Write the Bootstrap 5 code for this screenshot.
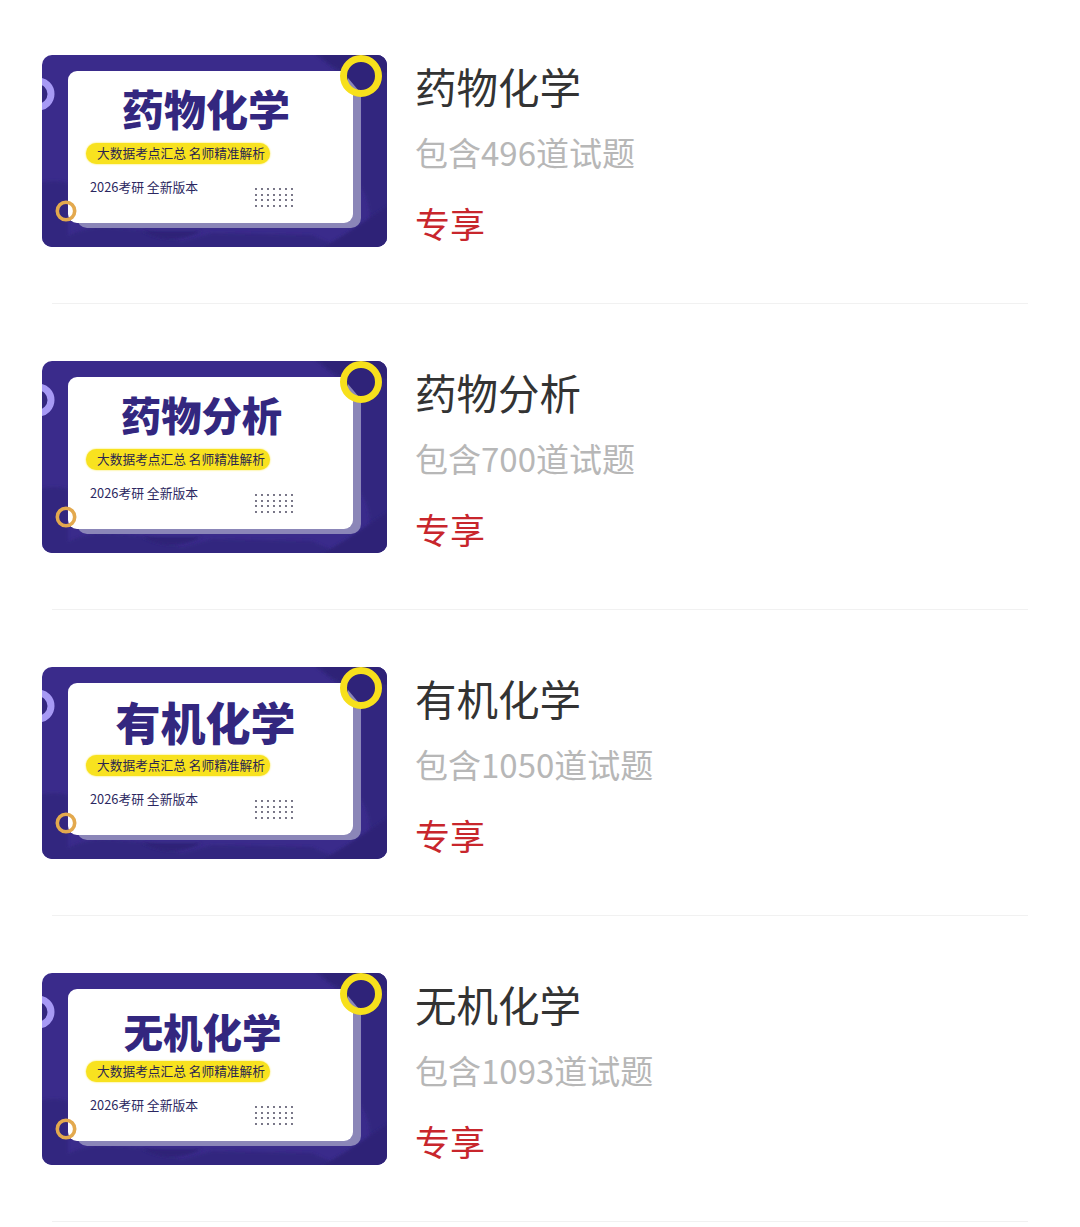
<!DOCTYPE html>
<html lang="zh-CN">
<head>
  <meta charset="UTF-8" />
  <title>题库列表</title>
  <meta name="viewport" content="width=device-width, initial-scale=1">
  <link href="https://cdn.jsdelivr.net/npm/bootstrap@5.3.0/dist/css/bootstrap.min.css" rel="stylesheet">
  <style>
    body {
      background: #fff;
      font-family: "Noto Sans CJK SC", "Noto Sans", sans-serif;
    }
    .page-list { padding-top: 55px; }
    .bank-row { padding-left: 42px; height: 248px; }
    .bank-sep { height: 1px; margin: 0 52px 57px; background: #f1f1f1; }
    .thumb {
      position: relative;
      width: 345px;
      height: 192px;
      flex: none;
      border-radius: 10px;
      overflow: hidden;
      background: #3a2b8b;
    }
    .thumb svg { position: absolute; left: 0; top: 0; width: 345px; height: 192px; }
    .thumb-panel {
      position: relative;
      width: 285px;
      height: 152px;
      margin: 16px 0 0 26px;
      background: #fff;
      border-radius: 9px;
    }
    .thumb-title {
      height: 72px;
      color: #33277f;
      font-weight: 900;
      white-space: nowrap;
      text-align: center;
    }
    .t1 { font-size: 42px; line-height: 74px; padding-right: 9px; }
    .t2 { font-size: 40.3px; line-height: 74px; padding-right: 18px; }
    .t3 { font-size: 45px; line-height: 78px; padding-right: 10px; }
    .t4 { font-size: 39.5px; line-height: 84px; padding-right: 16px; }
    .thumb-pill {
      width: 184px;
      height: 21px;
      margin-left: 18px;
      padding-left: 6px;
      background: #f8e21f;
      border-radius: 11px;
      box-shadow: 0 0 2px #f8e21f;
      color: #2b2550;
      font-size: 12.7px;
      line-height: 20px;
      text-align: center;
      white-space: nowrap;
    }
    .thumb-ver {
      margin: 13px 0 0 22px;
      color: #2b2760;
      font-size: 12.8px;
      line-height: 19px;
      white-space: nowrap;
    }
    .bank-info { margin-left: 28px; }
    .bank-name { height: 65px; color: #333; font-size: 41.5px; line-height: 62px; }
    .bank-count { height: 65px; color: #b7b7b7; font-size: 33px; line-height: 64px; }
    .bank-tag { color: #c8262c; font-size: 35px; line-height: 76px; }
  </style>
</head>
<body>
  <svg width="0" height="0" class="d-block">
    <defs>
      <filter id="soft"><feGaussianBlur stdDeviation="1.5"/></filter>
      <symbol id="thumbBack" viewBox="0 0 345 192">
        <g filter="url(#soft)" fill="#33267f">
          <path d="M262 -4h87v196h-35q25-25 5-60l0-100q-25-15-50-36z"/>
          <path d="M-4 128q18-4 30 0v70H-4z"/>
          <path d="M10 196q10-20 50-24l50 4 30 10 30-8 100 2 40 18z"/>
        </g>
        <g filter="url(#soft)" fill="#2e2377">
          <path d="M100 176q30 16 60 0z"/>
          <path d="M275 196l30-18 42-28v46z"/>
          <path d="M275 -4h74v22h-40q-20-4-34-22z"/>
        </g>
        <rect x="35" y="24" width="284" height="149" rx="10" fill="#8b86b8"/>
      </symbol>
      <symbol id="thumbFront" viewBox="0 0 345 192">
        <circle cx="319" cy="21" r="17.5" fill="#2f2379"/>
        <path d="M306 23l11 13-14-2z" fill="#8b86b8"/>
        <circle cx="319" cy="21" r="17.5" fill="none" stroke="#f7e01c" stroke-width="7"/>
        <circle cx="-4" cy="39" r="13" fill="#33277f" stroke="#a79af5" stroke-width="7"/>
        <circle cx="24" cy="156" r="8.7" fill="none" stroke="#e3a94e" stroke-width="3.6"/>
        <g fill="#3a3650">
          <circle cx="214" cy="134" r=".9"/><circle cx="220" cy="134" r=".9"/><circle cx="226" cy="134" r=".9"/><circle cx="232" cy="134" r=".9"/><circle cx="238" cy="134" r=".9"/><circle cx="244" cy="134" r=".9"/><circle cx="250" cy="134" r=".9"/>
          <circle cx="214" cy="140" r=".9"/><circle cx="220" cy="140" r=".9"/><circle cx="226" cy="140" r=".9"/><circle cx="232" cy="140" r=".9"/><circle cx="238" cy="140" r=".9"/><circle cx="244" cy="140" r=".9"/><circle cx="250" cy="140" r=".9"/>
          <circle cx="214" cy="145" r=".9"/><circle cx="220" cy="145" r=".9"/><circle cx="226" cy="145" r=".9"/><circle cx="232" cy="145" r=".9"/><circle cx="238" cy="145" r=".9"/><circle cx="244" cy="145" r=".9"/><circle cx="250" cy="145" r=".9"/>
          <circle cx="214" cy="151" r=".9"/><circle cx="220" cy="151" r=".9"/><circle cx="226" cy="151" r=".9"/><circle cx="232" cy="151" r=".9"/><circle cx="238" cy="151" r=".9"/><circle cx="244" cy="151" r=".9"/><circle cx="250" cy="151" r=".9"/>
        </g>
      </symbol>
    </defs>
  </svg>

  <div class="page-list">
    <div class="bank-row d-flex">
      <div class="thumb">
        <svg><use href="#thumbBack"/></svg>
        <div class="thumb-panel">
          <div class="thumb-title t1">药物化学</div>
          <div class="thumb-pill">大数据考点汇总 名师精准解析</div>
          <div class="thumb-ver">2026考研 全新版本</div>
        </div>
        <svg><use href="#thumbFront"/></svg>
      </div>
      <div class="bank-info">
        <div class="bank-name">药物化学</div>
        <div class="bank-count">包含496道试题</div>
        <div class="bank-tag">专享</div>
      </div>
    </div>
    <div class="bank-sep"></div>

    <div class="bank-row d-flex">
      <div class="thumb">
        <svg><use href="#thumbBack"/></svg>
        <div class="thumb-panel">
          <div class="thumb-title t2">药物分析</div>
          <div class="thumb-pill">大数据考点汇总 名师精准解析</div>
          <div class="thumb-ver">2026考研 全新版本</div>
        </div>
        <svg><use href="#thumbFront"/></svg>
      </div>
      <div class="bank-info">
        <div class="bank-name">药物分析</div>
        <div class="bank-count">包含700道试题</div>
        <div class="bank-tag">专享</div>
      </div>
    </div>
    <div class="bank-sep"></div>

    <div class="bank-row d-flex">
      <div class="thumb">
        <svg><use href="#thumbBack"/></svg>
        <div class="thumb-panel">
          <div class="thumb-title t3">有机化学</div>
          <div class="thumb-pill">大数据考点汇总 名师精准解析</div>
          <div class="thumb-ver">2026考研 全新版本</div>
        </div>
        <svg><use href="#thumbFront"/></svg>
      </div>
      <div class="bank-info">
        <div class="bank-name">有机化学</div>
        <div class="bank-count">包含1050道试题</div>
        <div class="bank-tag">专享</div>
      </div>
    </div>
    <div class="bank-sep"></div>

    <div class="bank-row d-flex">
      <div class="thumb">
        <svg><use href="#thumbBack"/></svg>
        <div class="thumb-panel">
          <div class="thumb-title t4">无机化学</div>
          <div class="thumb-pill">大数据考点汇总 名师精准解析</div>
          <div class="thumb-ver">2026考研 全新版本</div>
        </div>
        <svg><use href="#thumbFront"/></svg>
      </div>
      <div class="bank-info">
        <div class="bank-name">无机化学</div>
        <div class="bank-count">包含1093道试题</div>
        <div class="bank-tag">专享</div>
      </div>
    </div>
    <div class="bank-sep"></div>
  </div>

  <script src="https://cdn.jsdelivr.net/npm/bootstrap@5.3.0/dist/js/bootstrap.bundle.min.js"></script>
</body>
</html>
